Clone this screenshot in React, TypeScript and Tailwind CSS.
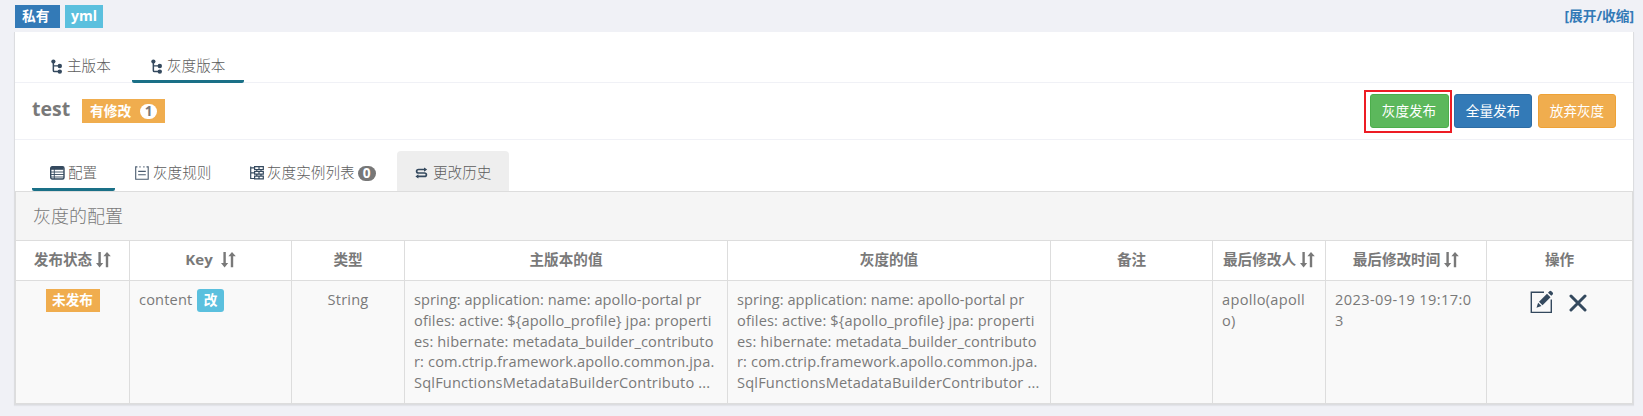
import React from "react";

const LATIN = "font-['Open_Sans','Noto_Sans_CJK_SC',sans-serif]";

function TreeIcon() {
  return (
    <svg width="12" height="15" viewBox="0 0 12 15" className="shrink-0" fill="#34495e">
      <circle cx="2.4" cy="2.5" r="2.1" />
      <path d="M1.6 3h1.5v3.2h5v1.4h-5v4.2h5v1.5H3.4Q1.6 13.3 1.6 11.4z" />
      <circle cx="8.8" cy="7" r="2.2" />
      <circle cx="8.8" cy="12.6" r="2.2" />
    </svg>
  );
}

function TableIcon() {
  return (
    <svg width="15" height="14" viewBox="0 0 15 14" className="shrink-0" fill="none" stroke="#34495e">
      <rect x="0.7" y="0.7" width="13.3" height="12.3" rx="1.5" strokeWidth="1.4" />
      <rect x="1" y="1" width="12.6" height="2.8" fill="#34495e" stroke="none" />
      <path d="M1 6h13M1 8.5h13M1 11h13M4.3 3v10" strokeWidth="0.9" />
    </svg>
  );
}

function RuleIcon() {
  return (
    <svg width="14" height="14" viewBox="0 0 14 14" className="shrink-0" fill="none" stroke="#4a5b6e" strokeWidth="1.1">
      <path d="M2.4 .9H.7v12.4h12.5V.9h-1.7M4.4 .9h1.2M8.3 .9h1.2M3.2 5.4h7.6M3.2 8.7h7.6" />
    </svg>
  );
}

function InstancesIcon() {
  return (
    <svg width="14" height="14" viewBox="0 0 14 14" className="shrink-0" fill="none" stroke="#34495e" strokeWidth="1.2">
      <path d="M.7.5v12h4M.7 1.8h4M.7 6.8h4" />
      <path d="M4.6.7h8.7v2.8H4.6zM4.6 5.4h8.7v2.8H4.6zM4.6 10.1h8.7v2.8H4.6zM9 .7v2.8M9 5.4v2.8M9 10.1v2.8M6.8 3.5v2M11 3.5v2M6.8 8.2v2M11 8.2v2" />
    </svg>
  );
}

function HistoryIcon() {
  return (
    <svg width="13" height="12" viewBox="0 0 13 12" className="shrink-0" fill="none" stroke="#34495e" strokeWidth="1.7">
      <path d="M10.5 2.5H3.6Q1.6 2.5 1.6 4.2T3.6 6h5.8q2 0 2 1.7T9.4 9.4H2" />
      <path d="M9 .4 12.2 2.5 9 4.7zM3.4 7.3.4 9.4l3 2.2z" fill="#34495e" stroke="none" />
    </svg>
  );
}

function SortIcon() {
  return (
    <svg width="15" height="16" viewBox="0 0 15 16" className="shrink-0" fill="#797979">
      <path d="M2.4 0h2.4v11h2.4L3.6 15.4 0 11h2.4zM9.8 15.2h2.4v-11h2.6L11 0 7.4 4.2h2.4z" />
    </svg>
  );
}

function EditIcon() {
  return (
    <svg width="24" height="24" viewBox="0 0 24 24" className="shrink-0" fill="#34495e">
      <path d="M14 2.2H1.3v20.2h20V9.5" fill="none" stroke="#34495e" strokeWidth="1.4" />
      <path d="m6.5 17.7 1.6-5 3.4 3.4zM9 11.8l8-8 3.5 3.4-8 8zM18 2.8l1.4-1.6q1-.9 2 0l1.3 1.3q.8.9 0 1.9l-1.4 1.4z" />
    </svg>
  );
}

function CloseIcon() {
  return (
    <svg width="18" height="18" viewBox="0 0 18 18" className="shrink-0" fill="none" stroke="#34495e" strokeWidth="3" strokeLinecap="round">
      <path d="m2 2 14 14M16 2 2 16" />
    </svg>
  );
}

function Th({ children, last }: { children?: React.ReactNode; last?: boolean }) {
  return (
    <div className={`flex items-center justify-center whitespace-nowrap border-b border-[#ddd] pb-[2px] font-bold ${last ? "" : "border-r"}`}>
      {children}
    </div>
  );
}

function Td({ children, last, className = "" }: { children?: React.ReactNode; last?: boolean; className?: string }) {
  return (
    <div className={`whitespace-nowrap border-[#ddd] bg-[#f9f9f9] pt-[8px] ${last ? "" : "border-r"} ${className}`}>
      {children}
    </div>
  );
}

function ValueLines({ tail }: { tail: string }) {
  return (
    <>
      <div className="tracking-[0.05px]">spring: application: name: apollo-portal pr</div>
      <div className="tracking-[0.15px]">{"ofiles: active: ${apollo_profile} jpa: properti"}</div>
      <div className="tracking-[0.12px]">es: hibernate: metadata_builder_contributo</div>
      <div className="tracking-[0.15px]">r: com.ctrip.framework.apollo.common.jpa.</div>
      <div className="tracking-[0.17px]">{tail}</div>
    </>
  );
}

export default function App() {
  return (
    <div className={`h-[416px] w-[1643px] overflow-hidden bg-[#f0f1f6] pl-[14px] pr-[9px] text-[14.6px] text-[#797979] ${LATIN}`}>
      <header className="flex h-8 items-start justify-between pt-[5px]">
        <div className="flex gap-[5px] pl-px text-[13.7px] font-bold leading-[22px] text-white">
          <span className="h-[23px] w-[45px] bg-[#337ab7] pl-[7px]">私有</span>
          <span className="h-[23px] w-[38px] bg-[#5bc0de] text-center text-[14px] leading-[21px]">yml</span>
        </div>
        <a className="text-[13.7px] font-bold leading-[22px] text-[#337ab7]">[展开/收缩]</a>
      </header>

      <main className="h-[373px] border border-t-0 border-[#dcdde0] bg-white shadow-[0_1px_1px_rgba(0,0,0,0.05)]">
        <nav className="flex h-[51px] items-end border-b border-[#f0f1f6] pl-[17px] font-light text-[#5c5c5c]">
          <div className="flex h-[34px] w-[100px] items-center gap-[4px] pl-[19px] pt-[2px]">
            <TreeIcon />主版本
          </div>
          <div className="-mb-px flex h-[35px] w-[112px] items-center gap-[4px] rounded-[2px] border-b-[3px] border-[#1a7087] pl-[19px] pt-[4px]">
            <TreeIcon />灰度版本
          </div>
        </nav>

        <section className="flex h-[57px] items-center justify-between border-b border-[#f0f1f6] pl-[17px] pr-[17px]">
          <div className="flex items-center">
            <h1 className="w-[50px] whitespace-nowrap pb-[5px] text-[19.5px] font-bold">test</h1>
            <span className="flex h-6 w-[83px] items-center gap-[9px] bg-[#f0ad4e] pl-2 text-[13.7px] font-bold text-white">
              有修改
              <span className="flex h-[15px] w-[17px] items-center justify-center rounded-full bg-white text-[#797979]">1</span>
            </span>
          </div>
          <div className="flex items-center text-[13.6px] text-white">
            <div className="mr-[2px] flex h-[43px] w-[88px] items-center justify-center border-2 border-[#ed1c24] pl-[2px]">
              <button className="h-[34px] w-[79px] rounded-[3px] border border-[#4cae4c] bg-[#5cb85c]">灰度发布</button>
            </div>
            <button className="mr-[6px] h-[34px] w-[78px] rounded-[3px] border border-[#2e6da4] bg-[#337ab7]">全量发布</button>
            <button className="h-[34px] w-[78px] rounded-[3px] border border-[#eea236] bg-[#f0ad4e]">放弃灰度</button>
          </div>
        </section>

        <nav className="flex h-[51px] items-end pl-[17px] font-light text-[#5c5c5c]">
          <div className="flex h-10 w-[83px] items-center gap-[3px] rounded-[2px] border-b-[3px] border-[#1a7087] pl-[18px] pt-[7px]">
            <TableIcon />配置
          </div>
          <div className="flex h-10 w-[115px] items-center gap-[4px] pl-[20px] pt-[4px]">
            <RuleIcon />灰度规则
          </div>
          <div className="flex h-10 w-[167px] items-center gap-[3px] pl-[20px] pt-[4px]">
            <InstancesIcon />灰度实例列表
            <span className="flex h-[15px] w-[18px] items-center justify-center rounded-full bg-[#777] text-[13.7px] font-bold text-white">0</span>
          </div>
          <div className="flex h-10 w-[112px] items-center gap-[5px] rounded-t-[4px] bg-[#eee] pl-[18px] pt-[4px]">
            <HistoryIcon />更改历史
          </div>
        </nav>

        <section className="h-[213px] border border-[#ddd]">
          <h2 className="h-[49px] border-b border-[#ddd] bg-[#f5f5f5] pl-[17px] text-[18px] font-light leading-[48px]">灰度的配置</h2>
          <div className="grid h-[162px] grid-cols-[114px_162px_113px_323px_323px_162px_113px_161px_1fr] grid-rows-[40px_122px]">
            <Th><span className="mr-[4px]">发布状态</span><SortIcon /></Th>
            <Th><span className="mr-[8px] text-[15px]">Key</span><SortIcon /></Th>
            <Th>类型</Th>
            <Th>主版本的值</Th>
            <Th>灰度的值</Th>
            <Th>备注</Th>
            <Th><span className="mr-[4px]">最后修改人</span><SortIcon /></Th>
            <Th><span className="mr-[4px]">最后修改时间</span><SortIcon /></Th>
            <Th last>操作</Th>

            <Td className="flex justify-center">
              <span className="h-[23px] w-[54px] bg-[#f0ad4e] text-center text-[13.7px] font-bold leading-[22px] text-white">未发布</span>
            </Td>
            <Td className="flex pl-[9px] leading-[21px]">
              <span className="w-[58px] tracking-[0.17px]">content</span>
              <span className="h-[23px] w-[27px] rounded-[3px] bg-[#5bc0de] text-center text-[13.7px] font-bold leading-[22px] text-white">改</span>
            </Td>
            <Td className="text-center leading-[21px] tracking-[0.2px]">String</Td>
            <Td className="pl-[9px] leading-[20.8px]">
              <ValueLines tail="SqlFunctionsMetadataBuilderContributo ..." />
            </Td>
            <Td className="pl-[9px] leading-[20.8px]">
              <ValueLines tail="SqlFunctionsMetadataBuilderContributor ..." />
            </Td>
            <Td />
            <Td className="pl-[9px] leading-[20.8px] tracking-[0.3px]"><div>apollo(apoll</div><div>o)</div></Td>
            <Td className="pl-[9px] leading-[20.8px] tracking-[0.4px]"><div>2023-09-19 19:17:0</div><div>3</div></Td>
            <Td last className="flex items-start justify-center gap-[15px] pr-[3px]">
              <span className="pt-px"><EditIcon /></span>
              <span className="pt-[5px]"><CloseIcon /></span>
            </Td>
          </div>
        </section>
      </main>
    </div>
  );
}
